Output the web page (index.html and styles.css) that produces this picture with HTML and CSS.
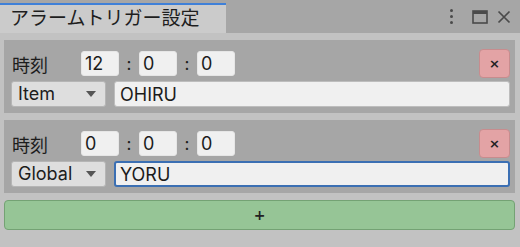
FILE: index.html
```html
<!DOCTYPE html>
<html lang="ja">
<head>
  <meta charset="UTF-8">
  <title>アラームトリガー設定</title>
  <link rel="stylesheet" href="styles.css">
</head>
<body>
  <div class="window">
    <div class="tabbar">
      <div class="tab">アラームトリガー設定</div>
      <div class="tab-tools">
        <span class="dots"><i></i><i></i><i></i></span>
        <svg class="maximize" width="16" height="14" viewBox="0 0 16 14">
          <rect x="1" y="1" width="14" height="12" fill="none" stroke="#4a4a4a" stroke-width="1.6"/>
          <rect x="1" y="1" width="14" height="3" fill="#4a4a4a"/>
        </svg>
        <svg class="close" width="14" height="14" viewBox="0 0 14 14">
          <path d="M1.5 1.5 L12.5 12.5 M12.5 1.5 L1.5 12.5" stroke="#4a4a4a" stroke-width="1.7"/>
        </svg>
      </div>
    </div>

    <div class="content">
      <div class="trigger">
        <div class="row">
          <span class="label">時刻</span>
          <input class="time" type="text" value="12">
          <span class="colon">:</span>
          <input class="time" type="text" value="0">
          <span class="colon">:</span>
          <input class="time" type="text" value="0">
          <button class="remove" type="button">×</button>
        </div>
        <div class="row">
          <div class="dropdown">Item <span class="arrow"></span></div>
          <input class="name" type="text" value="OHIRU">
        </div>
      </div>

      <div class="trigger">
        <div class="row">
          <span class="label">時刻</span>
          <input class="time" type="text" value="0">
          <span class="colon">:</span>
          <input class="time" type="text" value="0">
          <span class="colon">:</span>
          <input class="time" type="text" value="0">
          <button class="remove" type="button">×</button>
        </div>
        <div class="row">
          <div class="dropdown">Global <span class="arrow"></span></div>
          <input class="name focused" type="text" value="YORU">
        </div>
      </div>

      <button class="add" type="button">+</button>
    </div>
  </div>
</body>
</html>
```

FILE: styles.css
```css
body {
  margin: 0;
  font-family: "Inter", "Noto Sans CJK JP", sans-serif;
  color: #1c1c1c;
  background-color: #c2c2c2;
}

.window {
  width: 520px;
  height: 247px;
  overflow: hidden;
}

.tabbar {
  height: 33px;
  background-color: #a6a6a6;
  display: flex;
  align-items: flex-end;
  justify-content: space-between;
}

.tab {
  width: 216px;
  height: 28px;
  padding-left: 10px;
  border-top: 2px solid #3f80d8;
  background-color: #cbcbcb;
  font-size: 19px;
  line-height: 28px;
  color: #1e1e1e;
}

.tab-tools {
  align-self: center;
  display: flex;
  align-items: center;
  gap: 9px;
  padding-right: 9px;
}

.dots {
  display: flex;
  flex-direction: column;
  gap: 3px;
  margin-right: 10px;
}

.dots i {
  display: block;
  width: 3px;
  height: 3px;
  border-radius: 50%;
  background-color: #4a4a4a;
}

.content {
  padding: 7px 5px 0 4px;
}

.trigger {
  background-color: #a6a6a6;
  padding: 9px 5px 6px 7px;
  margin-bottom: 7px;
  display: flex;
  flex-direction: column;
  gap: 3px;
}

.row {
  display: flex;
  align-items: center;
}

.label {
  width: 69px;
  padding-left: 1px;
  font-size: 18px;
}

input {
  font-family: inherit;
  font-size: 18px;
  color: #1c1c1c;
  background-color: #f0f0f0;
  border: 1px solid #bdbdbd;
  border-radius: 3px;
  outline: none;
  box-sizing: border-box;
}

.time {
  width: 38px;
  height: 25px;
  padding: 0 3px;
  border-color: #e6e6e6;
}

.colon {
  width: 20px;
  text-align: center;
  font-size: 17px;
}

.remove {
  margin-left: auto;
  width: 31px;
  height: 29px;
  padding: 0;
  background-color: #e3a3a5;
  border: 1px solid #c78c8e;
  border-radius: 4px;
  font-family: "DejaVu Sans", sans-serif;
  font-size: 13px;
  font-weight: bold;
  color: #222;
  line-height: 25px;
}

.dropdown {
  width: 95px;
  height: 26px;
  box-sizing: border-box;
  padding-left: 6px;
  background-color: #dedede;
  border: 1px solid #b5b5b5;
  border-radius: 3px;
  font-size: 18px;
  line-height: 24px;
  display: flex;
  align-items: center;
  gap: 6px;
}

.arrow {
  margin-left: auto;
  margin-right: 9px;
  width: 0;
  height: 0;
  border-left: 5px solid transparent;
  border-right: 5px solid transparent;
  border-top: 6px solid #555;
}

.name {
  flex: 1;
  margin-left: 8px;
  height: 26px;
  padding: 0 5px;
}

.name.focused {
  border: 2px solid #3b6fb3;
  padding: 0 4px;
}

.add {
  width: 100%;
  height: 30px;
  margin-top: 0;
  background-color: #96c596;
  border: 1px solid #74a274;
  border-radius: 4px;
  font-family: "DejaVu Sans", sans-serif;
  font-size: 14px;
  font-weight: bold;
  color: #222;
}
```
